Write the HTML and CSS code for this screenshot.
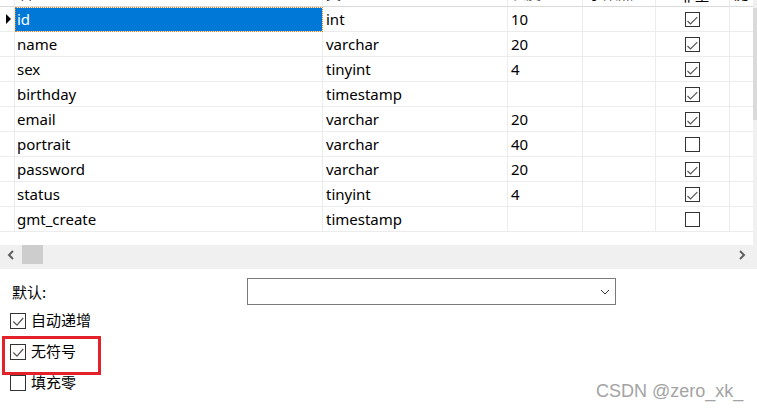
FILE: index.html
```html
<!DOCTYPE html>
<html>
<head>
<meta charset="utf-8">
<title>Fields</title>
<link rel="stylesheet" href="styles.css">
</head>
<body>
<div class="app">
  <div class="grid-area">
    <div class="table">
      <div class="row head">
        <div class="c c0"></div>
        <div class="c c1"><span class="ht">名</span></div>
        <div class="c c2"><span class="ht">类型</span></div>
        <div class="c c3"><span class="ht">长度</span></div>
        <div class="c c4"><span class="ht">小数点</span></div>
        <div class="c c5"><span class="ht ctr">非空</span></div>
        <div class="c c6"><span class="ht">键</span></div>
      </div>
      <div class="row">
        <div class="c c0"><span class="pointer"></span></div>
        <div class="c c1 selected">id</div>
        <div class="c c2">int</div>
        <div class="c c3">10</div>
        <div class="c c4"></div>
        <div class="c c5"><span class="gcb"><svg viewBox="0 0 15 15"><polyline points="2.5,9 5.5,12 12.3,5.2"/></svg></span></div>
        <div class="c c6"></div>
      </div>
      <div class="row">
        <div class="c c0"></div>
        <div class="c c1">name</div>
        <div class="c c2">varchar</div>
        <div class="c c3">20</div>
        <div class="c c4"></div>
        <div class="c c5"><span class="gcb"><svg viewBox="0 0 15 15"><polyline points="2.5,9 5.5,12 12.3,5.2"/></svg></span></div>
        <div class="c c6"></div>
      </div>
      <div class="row">
        <div class="c c0"></div>
        <div class="c c1">sex</div>
        <div class="c c2">tinyint</div>
        <div class="c c3">4</div>
        <div class="c c4"></div>
        <div class="c c5"><span class="gcb"><svg viewBox="0 0 15 15"><polyline points="2.5,9 5.5,12 12.3,5.2"/></svg></span></div>
        <div class="c c6"></div>
      </div>
      <div class="row">
        <div class="c c0"></div>
        <div class="c c1">birthday</div>
        <div class="c c2">timestamp</div>
        <div class="c c3"></div>
        <div class="c c4"></div>
        <div class="c c5"><span class="gcb"><svg viewBox="0 0 15 15"><polyline points="2.5,9 5.5,12 12.3,5.2"/></svg></span></div>
        <div class="c c6"></div>
      </div>
      <div class="row">
        <div class="c c0"></div>
        <div class="c c1">email</div>
        <div class="c c2">varchar</div>
        <div class="c c3">20</div>
        <div class="c c4"></div>
        <div class="c c5"><span class="gcb"><svg viewBox="0 0 15 15"><polyline points="2.5,9 5.5,12 12.3,5.2"/></svg></span></div>
        <div class="c c6"></div>
      </div>
      <div class="row">
        <div class="c c0"></div>
        <div class="c c1">portrait</div>
        <div class="c c2">varchar</div>
        <div class="c c3">40</div>
        <div class="c c4"></div>
        <div class="c c5"><span class="gcb"></span></div>
        <div class="c c6"></div>
      </div>
      <div class="row">
        <div class="c c0"></div>
        <div class="c c1">password</div>
        <div class="c c2">varchar</div>
        <div class="c c3">20</div>
        <div class="c c4"></div>
        <div class="c c5"><span class="gcb"><svg viewBox="0 0 15 15"><polyline points="2.5,9 5.5,12 12.3,5.2"/></svg></span></div>
        <div class="c c6"></div>
      </div>
      <div class="row">
        <div class="c c0"></div>
        <div class="c c1">status</div>
        <div class="c c2">tinyint</div>
        <div class="c c3">4</div>
        <div class="c c4"></div>
        <div class="c c5"><span class="gcb"><svg viewBox="0 0 15 15"><polyline points="2.5,9 5.5,12 12.3,5.2"/></svg></span></div>
        <div class="c c6"></div>
      </div>
      <div class="row">
        <div class="c c0"></div>
        <div class="c c1">gmt_create</div>
        <div class="c c2">timestamp</div>
        <div class="c c3"></div>
        <div class="c c4"></div>
        <div class="c c5"><span class="gcb"></span></div>
        <div class="c c6"></div>
      </div>
    </div>
    <div class="vscroll"><div class="vthumb"></div></div>
  </div>
  <div class="hscroll">
    <div class="sbtn"><svg width="8" height="10" viewBox="0 0 8 10"><polyline points="6,1 2,5 6,9"/></svg></div>
    <div class="hthumb"></div>
    <div class="htrack"></div>
    <div class="sbtn"><svg width="8" height="10" viewBox="0 0 8 10"><polyline points="2,1 6,5 2,9"/></svg></div>
    <div class="corner"></div>
  </div>
  <div class="splitter"></div>
  <div class="panel">
    <div class="field-row">
      <span class="label">默认:</span>
      <div class="select"><svg width="10" height="6" viewBox="0 0 10 6"><polyline points="1,1 5,5 9,1"/></svg></div>
    </div>
    <div class="check-row">
      <span class="cb"><svg viewBox="0 0 16 16"><polyline points="3.3,8.5 7,12.2 13.2,5"/></svg></span>
      <span class="cb-text">自动递增</span>
    </div>
    <div class="check-row marked">
      <span class="cb"><svg viewBox="0 0 16 16"><polyline points="3.3,8.5 7,12.2 13.2,5"/></svg></span>
      <span class="cb-text">无符号</span>
    </div>
    <div class="check-row">
      <span class="cb"></span>
      <span class="cb-text">填充零</span>
    </div>
  </div>
  <div class="watermark">CSDN @zero_xk_</div>
</div>
</body>
</html>
```

FILE: styles.css
```css
* { box-sizing: border-box; }

html, body {
  margin: 0;
  padding: 0;
  background: #ffffff;
}

body {
  font-family: "Noto Sans", "Noto Sans CJK SC", sans-serif;
  font-size: 15px;
  color: #000;
}

.app {
  position: relative;
  width: 757px;
  height: 409px;
  overflow: hidden;
  display: flex;
  flex-direction: column;
}

.grid-area {
  height: 245px;
  display: flex;
  background: #ffffff;
}

.table {
  width: 753px;
  display: flex;
  flex-direction: column;
}

.row {
  display: grid;
  grid-template-columns: 15px 308px 185px 75px 73px 74px 23px;
  height: 25px;
}

.row.head {
  height: 7px;
}

.c {
  border-right: 1px solid #ececec;
  border-bottom: 1px solid #ececec;
  line-height: 24px;
  padding-left: 3px;
  white-space: nowrap;
  overflow: hidden;
  position: relative;
}

.c6 { border-right: none; }

.c0 {
  padding-left: 0;
  display: flex;
  align-items: center;
}

.c1 { padding-left: 2px; }

.head .c {
  border-bottom: 1px solid #dadada;
  border-right-color: #ececec;
  line-height: 20px;
}

.ht {
  display: block;
  margin-top: -17px;
  font-size: 15px;
  color: #000;
}

.c1 .ht { padding-left: 1px; }
.c4 .ht { padding-left: 2px; }
.c5 .ht.ctr { padding-left: 4px; }

.pointer {
  margin-left: 6px;
  width: 0;
  height: 0;
  border-top: 5.5px solid transparent;
  border-bottom: 5.5px solid transparent;
  border-left: 5px solid #000;
}

.selected {
  background: #0078d7;
  color: #ffffff;
  outline: 1px dotted #d9822b;
  outline-offset: -1px;
  border-top: 1px solid #ffffff;
  line-height: 22px;
}

.c5 {
  display: flex;
  align-items: center;
  justify-content: center;
  padding-left: 0;
}

.gcb {
  width: 15px;
  height: 15px;
  border: 1px solid #333333;
  display: flex;
  margin-left: -1px;
}

.gcb svg, .cb svg {
  width: 100%;
  height: 100%;
  fill: none;
  stroke: #555555;
  stroke-width: 1.2;
}

.gcb svg {
  margin: -1px;
  width: 15px;
  height: 15px;
}

.vscroll {
  width: 4px;
  background: #f0f0f0;
  display: flex;
  flex-direction: column;
}

.vthumb {
  margin-top: 8px;
  height: 112px;
  background: #dadada;
}

.hscroll {
  height: 19px;
  background: #f0f0f0;
  display: flex;
}

.sbtn {
  width: 22px;
  display: flex;
  align-items: center;
  justify-content: center;
}

.sbtn svg {
  fill: none;
  stroke: #606060;
  stroke-width: 2;
}

.hthumb {
  width: 21px;
  background: #cdcdcd;
}

.htrack { flex: 1; }

.corner { width: 4px; }

.splitter {
  height: 5px;
  background: #f0f0f0;
}

.panel {
  flex: 1;
  background: #ffffff;
  padding-top: 9px;
  font-family: "Noto Sans CJK SC", "Noto Sans", sans-serif;
}

.field-row {
  display: flex;
  align-items: center;
  height: 27px;
  padding-left: 12px;
}

.label {
  width: 235px;
  font-size: 15px;
}

.select {
  width: 369px;
  height: 27px;
  border: 1px solid #7a7a7a;
  display: flex;
  align-items: center;
  justify-content: flex-end;
  padding-right: 5px;
}

.select svg {
  fill: none;
  stroke: #333;
  stroke-width: 1;
}

.check-row {
  height: 31px;
  display: flex;
  align-items: center;
  padding-left: 10px;
  gap: 5px;
  position: relative;
}

.cb {
  width: 16px;
  height: 16px;
  border: 1px solid #333333;
  display: flex;
}

.cb svg {
  margin: -1px;
  width: 16px;
  height: 16px;
}

.cb-text {
  font-size: 15px;
  line-height: 20px;
  margin-top: -2px;
}

.marked::after {
  content: "";
  position: absolute;
  left: 2px;
  top: 0;
  width: 93px;
  height: 33px;
  border: 3px solid #e3212a;
}

.watermark {
  position: absolute;
  left: 596px;
  top: 382px;
  font-family: "Liberation Sans", Arial, sans-serif;
  font-size: 18px;
  line-height: 18px;
  color: #a3a3a3;
  white-space: nowrap;
}
```
